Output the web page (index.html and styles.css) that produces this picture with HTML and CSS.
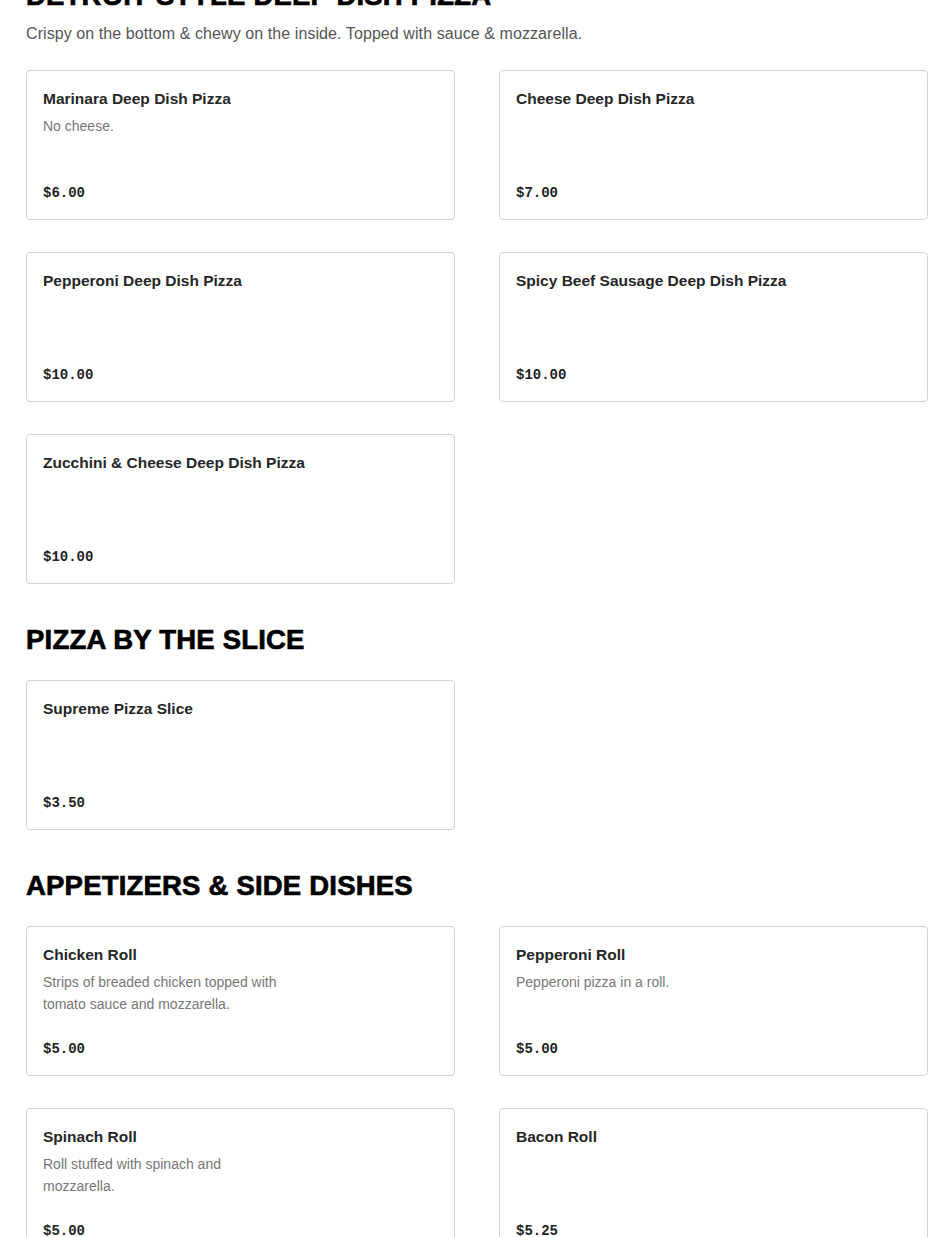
FILE: index.html
```html
<!DOCTYPE html>
<html lang="en">
<head>
<meta charset="utf-8">
<title>Menu</title>
<link rel="stylesheet" href="styles.css">
</head>
<body>
<main class="menu">
  <section class="section section-first">
    <h2 class="section-title">DETROIT STYLE DEEP DISH PIZZA</h2>
    <p class="section-sub">Crispy on the bottom &amp; chewy on the inside. Topped with sauce &amp; mozzarella.</p>
    <div class="grid">
      <div class="card">
        <div class="card-title">Marinara Deep Dish Pizza</div>
        <div class="card-desc">No cheese.</div>
        <div class="card-price">$6.00</div>
      </div>
      <div class="card">
        <div class="card-title">Cheese Deep Dish Pizza</div>
        <div class="card-price">$7.00</div>
      </div>
      <div class="card">
        <div class="card-title">Pepperoni Deep Dish Pizza</div>
        <div class="card-price">$10.00</div>
      </div>
      <div class="card">
        <div class="card-title">Spicy Beef Sausage Deep Dish Pizza</div>
        <div class="card-price">$10.00</div>
      </div>
      <div class="card">
        <div class="card-title">Zucchini &amp; Cheese Deep Dish Pizza</div>
        <div class="card-price">$10.00</div>
      </div>
    </div>
  </section>

  <section class="section">
    <h2 class="section-title">PIZZA BY THE SLICE</h2>
    <div class="grid">
      <div class="card">
        <div class="card-title">Supreme Pizza Slice</div>
        <div class="card-price">$3.50</div>
      </div>
    </div>
  </section>

  <section class="section">
    <h2 class="section-title">APPETIZERS &amp; SIDE DISHES</h2>
    <div class="grid">
      <div class="card">
        <div class="card-title">Chicken Roll</div>
        <div class="card-desc">Strips of breaded chicken topped with tomato sauce and mozzarella.</div>
        <div class="card-price">$5.00</div>
      </div>
      <div class="card">
        <div class="card-title">Pepperoni Roll</div>
        <div class="card-desc">Pepperoni pizza in a roll.</div>
        <div class="card-price">$5.00</div>
      </div>
      <div class="card">
        <div class="card-title">Spinach Roll</div>
        <div class="card-desc">Roll stuffed with spinach and mozzarella.</div>
        <div class="card-price">$5.00</div>
      </div>
      <div class="card">
        <div class="card-title">Bacon Roll</div>
        <div class="card-price">$5.25</div>
      </div>
    </div>
  </section>
</main>
</body>
</html>
```

FILE: styles.css
```css
* { box-sizing: border-box; }
html, body { margin: 0; padding: 0; background: #fff; }
body {
  font-family: "Liberation Sans", Arial, sans-serif;
  color: #222;
  overflow: hidden;
}
.menu {
  padding: 0 22px 0 26px;
  margin-top: -21px;
}
.section { margin-top: 39px; }
.section-first { margin-top: 0; }
.section-title {
  margin: 0;
  font-size: 27.5px;
  line-height: 34px;
  font-weight: 700;
  color: #000;
  letter-spacing: 0.2px;
  -webkit-text-stroke: 0.7px #000;
}
.section-sub {
  margin: 9px 0 0;
  font-size: 16px;
  line-height: 24px;
  color: #555;
  letter-spacing: 0.08px;
}
.grid {
  margin-top: 23px;
  display: grid;
  grid-template-columns: 1fr 1fr;
  column-gap: 44px;
  row-gap: 32px;
}
.section-first .grid { margin-top: 24px; }
.card {
  height: 150px;
  border: 1px solid #d2d2d2;
  border-radius: 4px;
  padding: 15px 16px 14px;
  display: flex;
  flex-direction: column;
}
.card-title {
  font-size: 15.5px;
  line-height: 26px;
  font-weight: 700;
  color: #262626;
}
.card-desc {
  margin-top: 3px;
  font-size: 14px;
  line-height: 22px;
  color: #777;
  max-width: 245px;
}
.card-price {
  margin-top: auto;
  font-family: "Liberation Mono", "Courier New", monospace;
  font-weight: 700;
  font-size: 14px;
  line-height: 24px;
  color: #222;
}
```
